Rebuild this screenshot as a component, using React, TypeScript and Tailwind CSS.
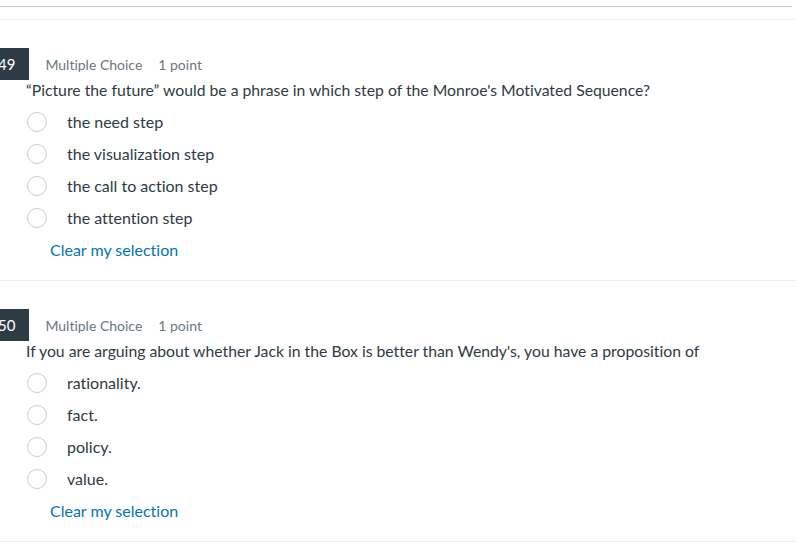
import React from "react";

type Question = {
  number: number;
  text: string;
  answers: string[];
};

const questions: Question[] = [
  {
    number: 49,
    text: "“Picture the future” would be a phrase in which step of the Monroe's Motivated Sequence?",
    answers: [
      "the need step",
      "the visualization step",
      "the call to action step",
      "the attention step",
    ],
  },
  {
    number: 50,
    text: "If you are arguing about whether Jack in the Box is better than Wendy's, you have a proposition of",
    answers: ["rationality.", "fact.", "policy.", "value."],
  },
];

function QuestionBlock({ q }: { q: Question }) {
  return (
    <div className="border-b border-[#f0f0f0] pt-[28px] pb-[14px]">
      <div className="flex h-[32px] items-center">
        <div className="-ml-[17px] flex h-[32px] items-center bg-[#2d3b45] pl-[15px] pr-[14px] text-[15px] text-white">
          {q.number}
        </div>
        <span className="ml-[16px] text-[14px] text-[#6b7780]">Multiple Choice</span>
        <span className="ml-[16px] text-[14px] text-[#6b7780]">1 point</span>
      </div>
      <p className="pl-[26px] text-[15.75px] leading-[20px] text-[#2d3b45]">{q.text}</p>
      <div className="mt-[6px]">
        {q.answers.map((a) => (
          <label key={a} className="flex h-[32px] items-center">
            <span className="ml-[27px] h-[20px] w-[20px] rounded-full border border-[#c7cdd1] bg-white" />
            <span className="ml-[20px] text-[16px] text-[#2d3b45]">{a}</span>
          </label>
        ))}
      </div>
      <div className="flex h-[32px] items-center pl-[50px]">
        <a href="#" className="text-[16px] text-[#0374b5]">
          Clear my selection
        </a>
      </div>
    </div>
  );
}

export default function App() {
  return (
    <div className="min-h-[551px] w-[796px] overflow-hidden bg-white font-['Lato',sans-serif] [font-variant-ligatures:none]">
      <div className="mr-[4px] mt-[6px] border-t border-[#c7cdd1]" />
      <div className="mt-[12px] border-t border-[#f0f0f0]" />
      {questions.map((q) => (
        <QuestionBlock key={q.number} q={q} />
      ))}
    </div>
  );
}
